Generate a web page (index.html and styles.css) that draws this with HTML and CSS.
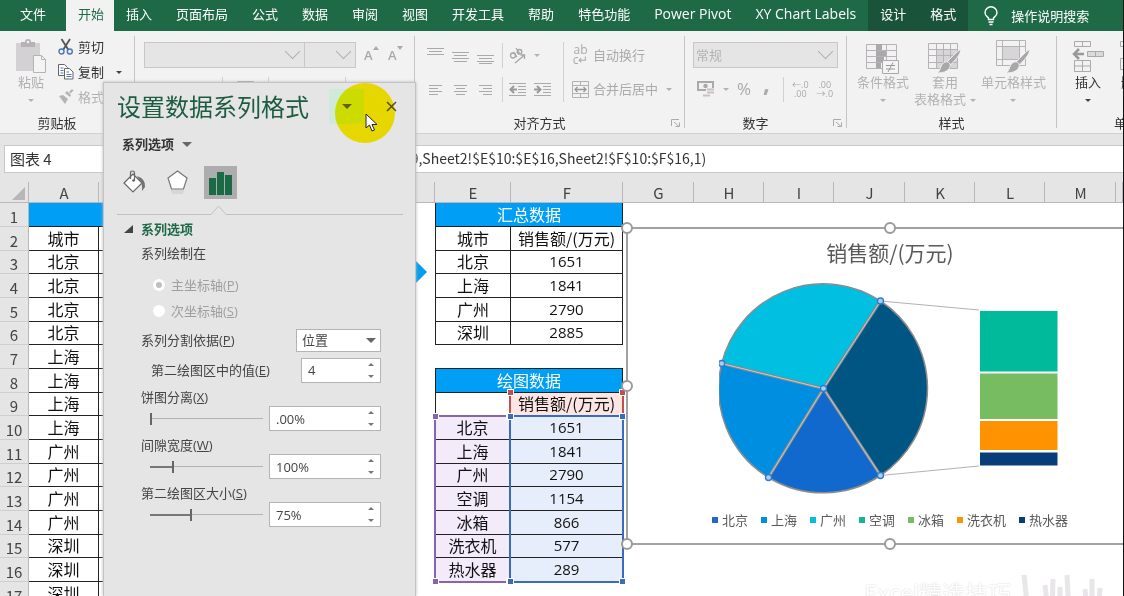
FILE: index.html
```html
<!DOCTYPE html>
<html lang="zh-CN">
<head>
<meta charset="utf-8">
<title>设置数据系列格式</title>
<link rel="stylesheet" href="styles.css">
</head>
<body>
<div class="app">
  <nav class="tabs">
    <button class="tab tab-file">文件</button>
    <button class="tab tab-active">开始</button>
    <button class="tab">插入</button>
    <button class="tab">页面布局</button>
    <button class="tab">公式</button>
    <button class="tab">数据</button>
    <button class="tab">审阅</button>
    <button class="tab">视图</button>
    <button class="tab">开发工具</button>
    <button class="tab">帮助</button>
    <button class="tab">特色功能</button>
    <button class="tab latin">Power Pivot</button>
    <button class="tab latin">XY Chart Labels</button>
    <button class="tab tab-context">设计</button>
    <button class="tab tab-context">格式</button>
    <button class="tab tell-me">
      <svg width="14" height="20" viewBox="0 0 14 20" fill="none" stroke="#fff" stroke-width="1.4"><path d="M4.5 13.5V12C3 10.500 1 9.500 1 6.700a6 6 0 0 1 12 0c0 2.800-2 3.800-3.500 5.300v1.500zM4.500 16h5M5.500 18.500h3"/></svg>
      操作说明搜索
    </button>
  </nav>

  <div class="ribbon">
    <section class="group g-clip">
      <div class="group-body">
        <button class="big off paste">
          <svg width="32" height="36" viewBox="0 0 32 36"><path d="M1 5h24v28H1z" fill="#d3d1d3"/><path d="M6 4h4q0-3 3-3t3 3h4v5H6z" fill="#b5b3b5"/><circle cx="13" cy="4" r="1.300" fill="#f3f2f3"/><path d="M18.500 17.500h8l4 4v13h-12z" fill="#f5f4f5" stroke="#b5b3b5"/><path d="M26.500 17.500v4h4" fill="none" stroke="#b5b3b5"/></svg>
          <span>粘贴</span><i class="arr"></i>
        </button>
        <div class="clip-list">
          <button class="row-btn"><svg width="16" height="18" viewBox="0 0 16 18" fill="none"><path d="M3.500 1 10.500 12M12 1 5 12" stroke="#555" stroke-width="1.800"/><circle cx="3.500" cy="13.500" r="2.500" stroke="#4a79b8" stroke-width="1.400"/><circle cx="11.800" cy="13.500" r="2.500" stroke="#4a79b8" stroke-width="1.400"/></svg>剪切</button>
          <button class="row-btn"><svg width="16" height="18" viewBox="0 0 16 18" fill="#fff" stroke="#666"><path d="M.5 1.500h6l3 3v8h-9z"/><path d="M6.500 5.500h5l3.500 3.500v7H6.500z"/><path d="M2.500 5h3M2.500 7.500h3M2.500 10h3M8.500 9h2.500M8.500 11.500h5M8.500 13.500h5" stroke="#4a79b8"/></svg>复制<i class="arr dark"></i></button>
          <button class="row-btn off"><svg width="16" height="18" viewBox="0 0 16 18" fill="#b5b3b5"><path d="M1 8l4-1 5 4-3 5zM7 5l5 4 1-2-4-4zM11 4l3-3 1.500 1.500-3 3z"/></svg>格式刷</button>
        </div>
      </div>
      <h2 class="group-name name-clip">剪贴板</h2>
    </section>

    <section class="group g-font">
      <div class="group-body rows">
        <div class="tools">
          <div class="combo font-name"><select aria-label="字体" disabled><option></option></select><i class="chev"></i></div>
          <div class="combo font-size"><select aria-label="字号" disabled><option></option></select><i class="chev"></i></div>
          <button class="tool letter">A<svg width="6" height="4"><path d="M0 4 3 0l3 4z" fill="#aaa"/></svg></button>
          <button class="tool letter">A<svg width="6" height="4"><path d="M0 0h6L3 4z" fill="#aaa"/></svg></button>
        </div>
        <div class="tools second">
          <button class="tool" aria-label="加粗"><svg width="12" height="12"><path d="M3 1.500h4a2 2 0 0 1 0 4.500H3zM3 6h5a2 2 0 0 1 0 5H3z" fill="none" stroke="#aaa" stroke-width="2"/></svg></button>
          <button class="tool" aria-label="倾斜"><svg width="12" height="12"><path d="M8 1 5 11" stroke="#aaa" stroke-width="1.500"/></svg></button>
          <button class="tool" aria-label="下划线"><svg width="12" height="12"><path d="M2.500 0v5a3.500 3.500 0 0 0 7 0V0M1 11.500h10" fill="none" stroke="#aaa"/></svg></button>
          <i class="vsep"></i>
          <button class="tool" aria-label="边框"><svg width="17" height="17"><path d="M.5.5h16v16H.5zM8.500 0v17M0 8.500h17" fill="none" stroke="#aaa"/></svg></button>
          <i class="vsep"></i>
          <button class="tool" aria-label="填充颜色"><svg width="17" height="17"><path d="M6 4V1.500h3V8L3 9z" fill="none" stroke="#aaa"/></svg></button>
          <button class="tool" aria-label="字体颜色"><svg width="17" height="17"><path d="M4 12 8.500 2 13 12M5.500 9h6" fill="none" stroke="#aaa"/></svg></button>
          <i class="vsep"></i>
        </div>
      </div>
    </section>

    <section class="group g-align">
      <div class="group-body align-body">
        <div class="rows">
          <div class="tools">
            <button class="tool" aria-label="顶端对齐"><svg width="17" height="17"><path d="M0 1.500h17M2 4.500h13M0 7.500h17" stroke="#aaa"/></svg></button>
            <button class="tool" aria-label="垂直居中"><svg width="17" height="17"><path d="M0 5.500h17M2 8.500h13M0 11.500h17M2 14.500h13" stroke="#aaa"/></svg></button>
            <button class="tool" aria-label="底端对齐"><svg width="17" height="17"><path d="M0 8.500h17M2 11.500h13M0 14.500h17M2 16.500h13" stroke="#aaa"/></svg></button>
            <i class="vsep"></i>
            <button class="tool" aria-label="方向"><svg width="17" height="17" viewBox="0 0 17 17" fill="none" stroke="#a5a5a5" stroke-width="1.300"><circle cx="4" cy="8.500" r="2.500"/><path d="M4.500 5 8 10M7 1l4 6"/><circle cx="10.500" cy="4.800" r="2.300"/><path d="M6 16 15.500 8M11.500 8h4v4"/></svg></button>
            <i class="arr"></i>
          </div>
          <div class="tools">
            <button class="tool" aria-label="左对齐"><svg width="17" height="17"><path d="M2 4.500h13M2 7.500h9M2 10.500h13M2 13.500h9" stroke="#aaa"/></svg></button>
            <button class="tool" aria-label="居中"><svg width="17" height="17"><path d="M2 4.500h13M4 7.500h9M2 10.500h13M4 13.500h9" stroke="#aaa"/></svg></button>
            <button class="tool" aria-label="右对齐"><svg width="17" height="17"><path d="M2 4.500h13M6 7.500h9M2 10.500h13M6 13.500h9" stroke="#aaa"/></svg></button>
            <i class="vsep"></i>
            <button class="tool" aria-label="减少缩进"><svg width="17" height="17"><path d="M0 2.500h17M9 5.500h8M9 8.500h8M9 11.500h8M0 14.500h17" stroke="#aaa"/><path d="M5 5 1.500 8.500 5 12M2 8.500h6" stroke="#999" stroke-width="2" fill="none"/></svg></button>
            <button class="tool" aria-label="增加缩进"><svg width="17" height="17"><path d="M0 2.500h17M9 5.500h8M9 8.500h8M9 11.500h8M0 14.500h17" stroke="#aaa"/><path d="M3 5l3.500 3.500L3 12M0 8.500h6" stroke="#999" stroke-width="2" fill="none"/></svg></button>
          </div>
        </div>
        <i class="vsep tall"></i>
        <div class="rows">
          <div class="tools">
            <button class="tool wrap-btn off"><span class="abc"><span>ab</span><span>c↵</span></span>自动换行</button>
          </div>
          <div class="tools">
            <button class="tool wrap-btn off"><svg width="17" height="17" fill="none" stroke="#b3b1b3"><path d="M.5.5h16v16H.5zM0 4.500h17M0 12.500h17M8.500 0v4.500M8.500 12.500V17"/><path d="M3 8.500h11M5.500 6 3 8.500 5.500 11M11.500 6 14 8.500 11.500 11" stroke="#999" stroke-width="1.300"/></svg>合并后居中</button>
            <i class="arr"></i>
          </div>
        </div>
      </div>
      <h2 class="group-name">对齐方式</h2>
      <svg class="launch" width="9" height="8" fill="none" stroke="#aaa"><path d="M.5 7V.5H8M3 3l5 4.500M8.500 3.500v4h-4"/></svg>
    </section>

    <section class="group g-num">
      <div class="group-body rows">
        <div class="tools">
          <div class="combo num-format"><select aria-label="数字格式" disabled><option>常规</option></select><i class="chev"></i></div>
        </div>
        <div class="tools num-tools">
          <button class="tool" aria-label="会计格式"><svg width="18" height="17" viewBox="0 0 18 17"><path d="M1 1h15v8H1z" fill="none" stroke="#aaa" stroke-width="2"/><circle cx="8.500" cy="5" r="2.200" fill="#aaa"/><path d="M9 7h8v9H9z" fill="#f3f2f3"/><path d="M10 8.500h7M10 11.500h7M6 14.500h7" stroke="#c9bfc6" stroke-width="2"/></svg></button>
          <i class="arr"></i>
          <button class="tool sign">%</button>
          <button class="tool sign comma">,</button>
          <i class="vsep"></i>
          <button class="tool dec"><span>←.0</span><span>.00</span></button>
          <button class="tool dec"><span>.00</span><span>→.0</span></button>
        </div>
      </div>
      <h2 class="group-name">数字</h2>
      <svg class="launch" width="9" height="8" fill="none" stroke="#aaa"><path d="M.5 7V.5H8M3 3l5 4.500M8.500 3.500v4h-4"/></svg>
    </section>

    <section class="group g-style">
      <div class="group-body bigs">
        <button class="big off">
          <svg width="34" height="34" viewBox="0 0 34 34" fill="none"><path d="M.5 4.500h30v24H.5zM0 10.500h30M0 16.500h30M0 22.500h30M10.500 4v24M20.500 4v24" stroke="#b5b3b5"/><path d="M10 4h6v6h-6zM10 11h10v5H10zM10 17h8v5h-8zM10 23h5v5h-5z" fill="#aaa8aa"/><path d="M16.500 20.500h16v13h-16z" fill="#f5f4f5" stroke="#aaa"/><path d="M20 25.500h9M20 29h9M27 22.500 22 32" stroke="#999"/></svg>
          <span>条件格式</span><i class="arr"></i>
        </button>
        <button class="big off">
          <svg width="34" height="34" viewBox="0 0 34 34" fill="none"><path d="M8 10h22v18H8z" fill="#d8d5d8"/><path d="M.5 3.500h29v25H.5zM0 9.500h29M0 15.500h29M0 22.500h29M8.500 3v25M15.500 3v25M22.500 3v25" stroke="#b5b3b5"/><path d="M33 9c0 5-7 13-11 16l-3-3C23 18 28 12 33 9z" fill="#a9a7a9" stroke="#f3f2f3"/><path d="M17 22c4-1 6 2 5 5-2 5-8 6-13 6 4-2 3-9 8-11z" fill="#a9a7a9" stroke="#f3f2f3"/></svg>
          <span>套用<br>表格格式<i class="arr side"></i></span>
        </button>
        <button class="big off">
          <svg width="34" height="34" viewBox="0 0 34 34" fill="none"><path d="M6 7h17v12H6z" fill="#d8d5d8"/><path d="M.5.5h29v25H.5zM0 6.500h29M0 19.500h29M6.500 0v25M23.500 0v25" stroke="#b5b3b5"/><path d="M34 9c0 5-7 13-11 16l-3-3C24 18 29 12 34 9z" fill="#a9a7a9" stroke="#f3f2f3"/><path d="M18 22c4-1 6 2 5 5-2 5-8 6-13 6 4-2 3-9 8-11z" fill="#a9a7a9" stroke="#f3f2f3"/></svg>
          <span>单元格样式</span><i class="arr"></i>
        </button>
      </div>
      <h2 class="group-name">样式</h2>
    </section>

    <section class="group g-cells">
      <div class="group-body bigs">
        <button class="big">
          <svg width="32" height="34" viewBox="0 0 32 34" fill="none" stroke="#aaa"><path d="M2.500 1.500h16v5h-16zM10.500 1v5M2.500 20.500h16v11h-16zM10.500 20v12M2 26h17"/><path d="M15.500 11.500h16v5h-16zM23.500 11v5" fill="#dbd9db"/><path d="M12 14H2M7 9l-5 5 5 5" stroke="#999" stroke-width="2.500"/></svg>
          <span>插入</span><i class="arr dark"></i>
        </button>
        <button class="big">
          <svg width="32" height="34" viewBox="0 0 32 34" fill="none" stroke="#aaa"><path d="M2.500 1.500h16v5h-16zM10.500 1v5M2.500 18.500h16v11h-16zM10.500 18v12"/></svg>
          <span>删除</span><i class="arr dark"></i>
        </button>
      </div>
      <h2 class="group-name">单元格</h2>
    </section>
  </div>

  <div class="formula-bar">
    <input class="name-box" aria-label="名称框" value="图表 4">
    <input class="formula" aria-label="编辑栏" value="=SERIES(Sheet2!$F$9,Sheet2!$E$10:$E$16,Sheet2!$F$10:$F$16,1)">
  </div>

  <main class="sheet">
    <table class="grid">
      <colgroup><col class="c-head"><col class="c-col"><col class="c-b"><col class="c-cd"><col class="c-e"><col class="c-f"><col class="c-wide"><col class="c-col"><col class="c-col"><col class="c-wide"><col class="c-col"><col class="c-col"><col class="c-wide"><col></colgroup>
      <thead><tr><th class="corner"><svg width="13" height="13"><path d="M13 0v13H0z" fill="#b8b6b8"/></svg></th><th>A</th><th></th><th></th><th>E</th><th>F</th><th>G</th><th>H</th><th>I</th><th>J</th><th>K</th><th>L</th><th>M</th><th></th></tr></thead>
      <tbody>
        <tr><th>1</th><td class="blue"></td><td class="blue"></td><td></td><td class="blue first" colspan="2">汇总数据</td></tr>
        <tr><th>2</th><td class="box">城市</td><td class="box"></td><td></td><td class="box first">城市</td><td class="box">销售额/(万元)</td></tr>
        <tr><th>3</th><td class="box">北京</td><td class="box"></td><td></td><td class="box first">北京</td><td class="box num">1651</td></tr>
        <tr><th>4</th><td class="box">北京</td><td class="box"></td><td></td><td class="box first">上海</td><td class="box num">1841</td></tr>
        <tr><th>5</th><td class="box">北京</td><td class="box"></td><td></td><td class="box first">广州</td><td class="box num">2790</td></tr>
        <tr><th>6</th><td class="box">北京</td><td class="box"></td><td></td><td class="box first">深圳</td><td class="box num">2885</td></tr>
        <tr><th>7</th><td class="box">上海</td><td class="box"></td><td></td><td class="under" colspan="2"></td></tr>
        <tr><th>8</th><td class="box">上海</td><td class="box"></td><td></td><td class="blue first" colspan="2">绘图数据</td></tr>
        <tr><th>9</th><td class="box">上海</td><td class="box"></td><td></td><td class="box first"></td><td class="box red">销售额/(万元)</td></tr>
        <tr><th>10</th><td class="box">上海</td><td class="box"></td><td></td><td class="box cat">北京</td><td class="box val num">1651</td></tr>
        <tr><th>11</th><td class="box">广州</td><td class="box"></td><td></td><td class="box cat">上海</td><td class="box val num">1841</td></tr>
        <tr><th>12</th><td class="box">广州</td><td class="box"></td><td></td><td class="box cat">广州</td><td class="box val num">2790</td></tr>
        <tr><th>13</th><td class="box">广州</td><td class="box"></td><td></td><td class="box cat">空调</td><td class="box val num">1154</td></tr>
        <tr><th>14</th><td class="box">广州</td><td class="box"></td><td></td><td class="box cat">冰箱</td><td class="box val num">866</td></tr>
        <tr><th>15</th><td class="box">深圳</td><td class="box"></td><td></td><td class="box cat">洗衣机</td><td class="box val num">577</td></tr>
        <tr><th>16</th><td class="box">深圳</td><td class="box"></td><td></td><td class="box cat">热水器</td><td class="box val num">289</td></tr>
        <tr><th>17</th><td class="box">深圳</td><td class="box"></td><td></td><td></td><td></td></tr>
      </tbody>
    </table>
    <div class="range range-red"><b></b><b></b></div>
    <div class="range range-cat"><b></b><b></b><b></b><b></b></div>
    <div class="range range-val"><b></b><b></b><b></b><b></b></div>
    <svg class="arrow-shape" width="12" height="24"><path d="M0 0 12 12 0 24z" fill="#009ef0"/></svg>

    <figure class="chart">
      <figcaption>销售额/(万元)</figcaption>
      <svg class="plot" width="342" height="214" viewBox="719 282 342 214">
        <g stroke="#8c8c8c" stroke-width="1.500">
          <path d="M823.500 388.500 880.500 301A104.500 104.500 0 0 1 880.500 475.500z" fill="#005583"/>
          <path d="M823.500 388.500 880.500 475.500A104.500 104.500 0 0 1 768.500 477.500z" fill="#1169cd"/>
          <path d="M823.500 388.500 768.500 477.500A104.500 104.500 0 0 1 721.700 363.500z" fill="#008fe0"/>
          <path d="M823.500 388.500 721.700 363.500A104.500 104.500 0 0 1 880.500 301z" fill="#00bfe0"/>
        </g>
        <path d="M880.500 475.500 823.500 388.500 880.500 301M768.500 477.500 823.500 388.500 721.700 363.500" fill="none" stroke="#848a8e" stroke-width="3"/>
        <path d="M880.500 475.500 823.500 388.500 880.500 301M768.500 477.500 823.500 388.500 721.700 363.500" fill="none" stroke="#c4ccd0" stroke-width="1"/>
        <path d="M880.500 301 979 310M880.500 475.500 979 466" stroke="#b5b0b5" fill="none"/>
        <path d="M980 311h77.500v60.500H980z" fill="#00ba9c"/>
        <path d="M980 373.500h77.500V419H980z" fill="#77bc60"/>
        <path d="M980 421h77.500v29H980z" fill="#ff9200"/>
        <path d="M980 452.500h77.500v13H980z" fill="#083d79"/>
        <g fill="#a5d0f5" stroke="#2f79cf" stroke-width="1.300"><circle cx="880.500" cy="301" r="3"/><circle cx="721.700" cy="363.500" r="3"/><circle cx="823.500" cy="388.500" r="3"/><circle cx="768.500" cy="477.500" r="3"/><circle cx="880.500" cy="475.500" r="3"/></g>
      </svg>
      <ul class="legend">
        <li class="k1">北京</li><li class="k2">上海</li><li class="k3">广州</li><li class="k4">空调</li><li class="k5">冰箱</li><li class="k6">洗衣机</li><li class="k7">热水器</li>
      </ul>
      <i class="knob tl"></i><i class="knob tc"></i><i class="knob ml"></i><i class="knob bl"></i><i class="knob bc"></i>
    </figure>

    <div class="watermark"><span>Excel精选技巧</span>
      <svg width="82" height="40" viewBox="0 0 82 40" fill="none" stroke="#e8e6e8" stroke-width="5"><path d="M3 2l4 38M24 12l3 28M32 6l-1 34M46 2l2 38M39 14v26M71 6v34M64 16l2 24M79 15l-2 25"/></svg>
    </div>
  </main>

  <aside class="pane">
    <header class="pane-head">
      <h1>设置数据系列格式</h1>
      <button class="pane-menu" aria-label="任务窗格选项"><i class="tri"></i></button>
      <button class="pane-close" aria-label="关闭"><svg width="11" height="11"><path d="M1 1l9 9M10 1l-9 9" stroke="#555" stroke-width="1.600"/></svg></button>
    </header>
    <button class="pane-scope">系列选项<i class="tri"></i></button>
    <div class="pane-tabs">
      <button aria-label="填充与线条"><svg width="25" height="25" viewBox="0 0 25 25"><path d="M11 4 2 13l9 9 9-9z" fill="#fff" stroke="#666" stroke-width="1.200"/><path d="M8.500 9V3q0-2 2-2t2 2v8" fill="none" stroke="#666" stroke-width="1.200"/><circle cx="11.500" cy="10.500" r="1.300" fill="#666"/><path d="M15 6q9 3 8 11l-3 4q1-8-4-13z" fill="#737173"/></svg></button>
      <button aria-label="效果"><svg width="23" height="27" viewBox="0 0 23 27"><path d="M11.500 2 21 9l-3.500 11h-12L2 9z" fill="#fff" stroke="#777" stroke-width="1.200"/><path d="M5 22h13M6 24h11" stroke="#c9c7c9"/></svg></button>
      <button class="on" aria-label="系列选项"><svg width="23" height="24"><path d="M0 7h7v17H0zM8 1h7v23H8zM16 4h7v20h-7z" fill="#1a6a46"/></svg></button>
    </div>
    <svg class="notch" viewBox="0 0 286 10" width="286" height="10"><path d="M0 9.500h94L101.500 1l7.500 8.500H286" fill="none" stroke="#c2c0c2"/></svg>
    <h2 class="section"><svg width="9" height="8"><path d="M9 0v8H0z" fill="#444"/></svg>系列选项</h2>
    <form class="options">
      <fieldset>
        <legend>系列绘制在</legend>
        <label class="radio"><input type="radio" name="axis" checked disabled><span>主坐标轴(<u>P</u>)</span></label>
        <label class="radio"><input type="radio" name="axis" disabled><span>次坐标轴(<u>S</u>)</span></label>
      </fieldset>
      <div class="field"><label for="split">系列分割依据(<u>P</u>)</label>
        <div class="drop"><select id="split"><option>位置</option></select><i class="tri"></i></div></div>
      <div class="field indent"><label for="second">第二绘图区中的值(<u>E</u>)</label>
        <div class="spin short"><input id="second" value="4"><span><i class="up"></i><i class="down"></i></span></div></div>
      <label class="caption" for="explode">饼图分离(<u>X</u>)</label>
      <div class="field slide"><input type="range" id="explode" min="0" max="400" value="0" style="--fill:0%">
        <div class="spin"><input aria-label="饼图分离" value=".00%"><span><i class="up"></i><i class="down"></i></span></div></div>
      <label class="caption" for="gap">间隙宽度(<u>W</u>)</label>
      <div class="field slide"><input type="range" id="gap" min="0" max="500" value="100" style="--fill:20%">
        <div class="spin"><input aria-label="间隙宽度" value="100%"><span><i class="up"></i><i class="down"></i></span></div></div>
      <label class="caption" for="size">第二绘图区大小(<u>S</u>)</label>
      <div class="field slide"><input type="range" id="size" min="5" max="200" value="75" style="--fill:36%">
        <div class="spin"><input aria-label="第二绘图区大小" value="75%"><span><i class="up"></i><i class="down"></i></span></div></div>
    </form>
    <i class="halo"></i>
    <svg class="cursor" width="13" height="19"><path d="M1 1v14l3.500-3 2.500 6 2.500-1-2.500-5.500h5z" fill="#fff" stroke="#222"/></svg>
  </aside>
</div>
</body>
</html>
```
FILE: styles.css
```css
* { box-sizing: border-box; }
body {
  margin: 0;
  font: 13px/18px "Open Sans", "Noto Sans CJK SC", sans-serif;
  color: #333;
}
button, input, select { font: inherit; color: inherit; }
button { border: 0; padding: 0; background: none; }
h1, h2, figure, ul, fieldset { margin: 0; padding: 0; border: 0; }
h2 { font-size: 13px; font-weight: 400; }

.app {
  position: relative;
  display: flex;
  flex-direction: column;
  height: 100vh;
  overflow: hidden;
  border-right: 1px solid #111;
  background: #fff;
}

/* ribbon tabs */
.tabs { display: flex; flex: none; height: 31px; background: #1e6a46; }
.tab { flex: none; padding: 0 12px 4px; color: #fff; white-space: nowrap; }
.tab-file { width: 66px; }
.tab-active { width: 48px; background: #f3f2f3; color: #1e6a46; }
.tab-context { background: #19543a; }
.latin { font-size: 14px; }
.tell-me { display: flex; align-items: center; gap: 13px; padding: 0 16px; }

/* ribbon */
.ribbon {
  display: flex;
  flex: none;
  height: 103px;
  padding: 5px 0;
  overflow: hidden;
  background: #f3f2f3;
  border-bottom: 1px solid #d2d0d2;
}
.group {
  position: relative;
  display: flex;
  flex: none;
  flex-direction: column;
  border-right: 1px solid #c6c4c6;
}
.g-clip { width: 135px; }
.g-font { width: 280px; }
.g-align { width: 270px; }
.g-num { width: 162px; }
.g-style { width: 210px; }
.g-cells { width: 154px; }
.group-body { display: flex; flex: none; height: 78px; }
.group-name { padding-right: 20px; text-align: center; }
.g-style .group-name, .g-cells .group-name { padding-right: 0; }
.launch { position: absolute; right: 4px; bottom: 1px; }
.off { color: #b3b1b3; }
.arr {
  flex: none;
  border: 3px solid transparent;
  border-top-color: #b3b1b3;
  border-bottom: 0;
}
.arr.dark { border-top-color: #444; }
.big { display: flex; flex: none; flex-direction: column; align-items: center; padding-top: 2px; line-height: 17px; }
.big .arr { margin-top: 8px; }
.big .side { display: inline-block; margin: 0 0 2px 4px; }
.paste { width: 58px; padding-left: 4px; }
.clip-list { display: flex; flex-direction: column; gap: 3px; }
.row-btn { display: flex; align-items: center; gap: 4px; height: 22px; white-space: nowrap; }
.row-btn .arr { margin-left: 8px; }
.bigs .big { white-space: nowrap; }
.g-style .bigs { justify-content: space-between; padding: 0 10px; }
.g-style .bigs .big { padding-top: 4px; }
.g-cells .bigs { padding-left: 15px; gap: 14px; }
.g-cells .bigs .big { padding-top: 4px; }

.rows { display: flex; flex-direction: column; padding-top: 2px; }
.tools { display: flex; align-items: center; gap: 8px; height: 34px; }
.tool { display: flex; flex: none; align-items: center; color: #aaa; }
.tool svg { display: block; }
.letter { align-items: flex-start; font-weight: 600; }
.vsep { flex: none; width: 1px; height: 25px; background: #d2d0d2; }
.vsep.tall { height: 60px; margin: 6px 8px 0 12px; }
.combo { position: relative; height: 26px; }
.combo select {
  width: 100%;
  height: 100%;
  padding: 0 2px;
  appearance: none;
  opacity: 1;
  color: #b3b1b3;
  background: #e6e5e6;
  border: 1px solid #c9c7c9;
  border-radius: 0;
}
.chev {
  position: absolute;
  right: 7px;
  top: 4px;
  width: 11px;
  height: 11px;
  border: solid #b0aeb0;
  border-width: 0 1px 1px 0;
  transform: rotate(45deg);
}
.font-name { width: 161px; }
.font-size { width: 52px; margin-left: -9px; }
.g-font .tools { padding-left: 9px; }
.g-font .letter { width: 16px; }
.g-font .second { gap: 14px; }
.align-body { padding-left: 12px; }
.align-body .rows .vsep { margin-right: -2px; }
.wrap-btn { gap: 4px; }
.abc { display: flex; flex-direction: column; align-items: center; width: 17px; font-size: 12px; line-height: 10px; }
.num-format { width: 145px; }
.g-num .tools { padding-left: 8px; }
.num-tools .tool:first-child { padding-left: 4px; }
.sign { font-size: 17px; }
.comma { width: 16px; padding: 0 0 12px 4px; font-size: 24px; font-weight: 700; }
.dec { flex-direction: column; font-size: 9px; line-height: 9px; }

/* formula bar */
.formula-bar {
  display: flex;
  flex: none;
  gap: 166px;
  height: 40px;
  padding: 11px 0 0 4px;
  background: #e6e5e6;
}
.formula-bar input { height: 28px; padding-top: 0; padding-bottom: 2px; border: 1px solid #c9c7c9; background: #fff; font-family: "Noto Sans CJK SC", sans-serif; }
.formula-bar .name-box { width: 106px; padding-left: 5px; font-size: 15px; }
.formula-bar .formula { flex: 1; min-width: 0; border-right: 0; font-size: 14px; }

/* worksheet */
.sheet { position: relative; flex: 1; overflow: hidden; }
.grid {
  width: 100%;
  table-layout: fixed;
  border-spacing: 0;
  font-family: "Noto Sans CJK SC", sans-serif;
  font-size: 16px;
  line-height: 18px;
  color: #111;
}
.c-head { width: 29px; }
.c-col { width: 70px; }
.c-wide { width: 71px; }
.c-b { width: 112px; }
.c-cd { width: 224px; }
.c-e { width: 76px; }
.c-f { width: 112px; }
.grid th { padding: 0; font-size: 15px; font-weight: 400; color: #444; background: #e6e5e6; }
.grid thead th {
  height: 29px;
  padding-top: 10px;
  border-bottom: 1px solid #b9b7b9;
  background: linear-gradient(#b9b7b9, #b9b7b9) right bottom / 1px 20px no-repeat, #e6e5e6;
}
.corner svg { display: block; margin-left: 12px; }
.grid tbody th { padding-top: 4px; border-right: 1px solid #b9b7b9; border-bottom: 1px solid #cfcdcf; }
.grid tbody tr { height: 24px; }
.grid tbody tr:nth-child(3n) { height: 23px; }
.grid td { padding: 0 0 2px; text-align: center; white-space: nowrap; }
.grid .blue { color: #fff; background: #009ef5; border: solid #222; border-width: 0 0 1px; }
.grid .first { border-left: 1px solid #222; }
.grid .blue.first { border-right: 1px solid #222; }
.grid .box { border-right: 1px solid #222; border-bottom: 1px solid #222; }
.grid .under { border-bottom: 1px solid #222; }
.grid .num { font-family: "Open Sans", sans-serif; font-size: 15px; }
.grid .red { background: #fde5e3; }
.grid .cat { background: #f3eafa; }
.grid .val { background: #e7eefb; }

/* coloured source ranges laid over the cells */
.range { position: absolute; border: 2px solid; }
.range-red { left: 509px; top: 219px; width: 115px; height: 24px; color: #c0504d; border-width: 0 2px; }
.range-cat { left: 434px; top: 241px; width: 77px; height: 168px; color: #8764b0; }
.range-val { left: 509px; top: 241px; width: 115px; height: 168px; color: #3b6cbc; }
.range b { position: absolute; width: 5px; height: 5px; background: currentColor; outline: 1px solid #fff; }
.range b:nth-child(1) { left: -3px; top: -3px; }
.range b:nth-child(2) { right: -3px; top: -3px; }
.range b:nth-child(3) { left: -3px; bottom: -3px; }
.range b:nth-child(4) { right: -3px; bottom: -3px; }
.arrow-shape { position: absolute; left: 415px; top: 86px; }

/* chart object */
.chart {
  position: absolute;
  left: 626px;
  top: 53px;
  width: 528px;
  display: flex;
  flex-direction: column;
  align-items: center;
  padding: 8px 0 13px;
  border: 2px solid #a3a1a3;
  background: #fff;
  font-family: "Noto Sans CJK SC", sans-serif;
  color: #595959;
}
.chart figcaption { font-size: 21px; line-height: 30px; }
.plot { margin: 15px 0 14px; }
.legend { display: flex; gap: 13px; list-style: none; line-height: 20px; }
.legend li { display: flex; align-items: center; gap: 4px; }
.legend li::before { content: ""; width: 6px; height: 6px; background: var(--key); }
.k1 { --key: #1f69c4; }
.k2 { --key: #008fdb; }
.k3 { --key: #00bfdc; }
.k4 { --key: #14b596; }
.k5 { --key: #77bc60; }
.k6 { --key: #ff9200; }
.k7 { --key: #083d79; }
.knob { position: absolute; width: 12px; height: 12px; border: 2px solid #9b999b; border-radius: 50%; background: #fff; }
.tl, .ml, .bl { left: -7px; }
.tc, .bc { left: calc(50% - 6px); }
.tl, .tc { top: -7px; }
.ml { top: calc(50% - 6px); }
.bl, .bc { bottom: -7px; }

.watermark {
  position: absolute;
  right: 20px;
  bottom: -17px;
  display: flex;
  align-items: center;
  gap: 10px;
  font-size: 23px;
  line-height: 24px;
  color: #fff;
  text-shadow: 0 0 2px #d0ced0;
}

/* task pane */
.pane {
  position: absolute;
  left: 103px;
  top: 82px;
  bottom: 0;
  width: 313px;
  padding: 6px 12px 0 13px;
  border: 1px solid #c4c2c4;
  border-bottom: 0;
  background: #e6e5e6;
  box-shadow: 0 0 3px #b9b7b9;
}
.tri { flex: none; border: 5px solid transparent; border-top-color: #666; border-bottom: 0; }
.pane-head { display: flex; align-items: center; }
.pane-head h1 { flex: 1; font-size: 24px; line-height: 35px; font-weight: 400; color: #1c5c40; white-space: nowrap; }
.pane-menu { display: flex; align-items: center; justify-content: center; width: 35px; height: 35px; background: #cdeadb; }
.pane-close { width: 11px; margin: 0 6px 0 22px; }
.pane-close svg { display: block; }
.pane-scope { display: flex; align-items: center; gap: 8px; margin: 11px 0 0 5px; font-weight: 700; color: #333; }
.pane-tabs { display: flex; gap: 9px; margin-top: 13px; }
.pane-tabs button { display: flex; align-items: center; justify-content: center; width: 33px; height: 33px; margin-left: 1px; }
.pane-tabs .on { background: #aeacae; }
.notch { display: block; margin-top: 6px; }
.section { display: flex; align-items: center; gap: 8px; margin: 5px 0 0 7px; font-weight: 700; color: #1c6a48; }
.options { padding: 6px 22px 0 24px; color: #444; }
.options legend { padding: 0; margin-bottom: 10px; }
.radio { display: flex; align-items: center; gap: 6px; height: 26px; margin-left: 12px; line-height: 20px; color: #a09ea0; }
.radio input { appearance: none; width: 12px; height: 12px; margin: 0; border: 3px solid #fff; border-radius: 50%; background: #fff; }
.radio input:checked { background: #c0bec0; }
.field { display: flex; align-items: center; justify-content: space-between; height: 30px; }
.options fieldset + .field { margin-top: 1px; }
.indent { padding-left: 10px; }
.caption { display: block; height: 18px; margin-top: 3px; }
.field.slide { height: 25px; margin-bottom: 5px; }
.slide + .caption { margin-top: 0; }
.drop, .spin { position: relative; display: flex; align-items: center; height: 25px; background: #fff; border: 1px solid #b5b3b5; }
.drop { width: 85px; height: 23px; }
.drop select { width: 100%; height: 100%; padding: 0 5px; border: 0; appearance: none; background: none; }
.drop .tri { position: absolute; right: 4px; }
.spin { width: 112px; }
.spin.short { width: 80px; }
.spin input { flex: 1; min-width: 0; height: 100%; padding: 0 6px; border: 0; background: none; }
.spin span { display: flex; flex-direction: column; gap: 9px; padding-right: 6px; }
.up, .down { border: 3px solid transparent; }
.up { border-top: 0; border-bottom-color: #777; }
.down { border-bottom: 0; border-top-color: #777; }
.slide input[type="range"] {
  appearance: none;
  width: 113px;
  height: 13px;
  margin: 0 0 0 9px;
  background:
    linear-gradient(#777, #777) left center / var(--fill) 2px no-repeat,
    linear-gradient(#b3b1b3, #b3b1b3) left center / 100% 1px no-repeat;
}
.slide input[type="range"]::-webkit-slider-thumb { appearance: none; width: 2px; height: 12px; background: #666; }
.slide .spin { flex: none; }
.slide input[type="range"] + .spin { margin-left: 6px; }
.halo {
  position: absolute;
  left: 231px;
  top: 0;
  width: 60px;
  height: 60px;
  border-radius: 50%;
  background: #fff000;
  mix-blend-mode: multiply;
}
.cursor { position: absolute; left: 261px; top: 30px; }
```
